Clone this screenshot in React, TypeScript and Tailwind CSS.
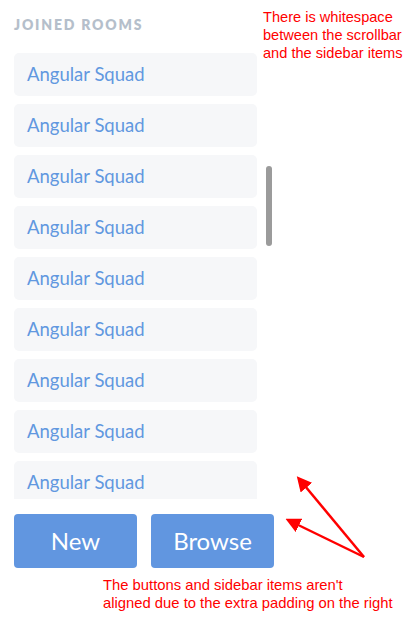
import React from "react";

const rooms = Array.from({ length: 9 }, () => "Angular Squad");

export default function App() {
  return (
    <div className="relative w-[419px] h-[621px] bg-white overflow-hidden" style={{ fontFamily: "Lato, 'Open Sans', sans-serif" }}>
      <div className="pl-[14px] pt-[14px] w-[274px]">
        <div className="h-[20px] flex items-center text-[14px] font-extrabold tracking-[1.8px] text-[#b5bfcb] uppercase">
          Joined Rooms
        </div>
        <div className="mt-[19px] h-[446px] flex overflow-hidden">
          <div className="w-[243px] flex flex-col gap-[8px] shrink-0">
            {rooms.map((r, i) => (
              <div key={i} className="h-[43px] shrink-0 rounded-[5px] bg-[#f6f7f9] pl-[13px] flex items-center text-[18.5px] text-[#6198e0]">
                {r}
              </div>
            ))}
          </div>
          <div className="ml-[9px] mt-[113px] w-[6px] h-[80px] rounded-full bg-[#9b9b9b]" />
        </div>
        <div className="mt-[15px] flex gap-[14px]">
          <button className="w-[123px] h-[54px] rounded-[4px] bg-[#6196e0] text-white text-[24px]">New</button>
          <button className="w-[123px] h-[54px] rounded-[4px] bg-[#6196e0] text-white text-[24px]">Browse</button>
        </div>
      </div>

      <div className="absolute left-[263px] top-[8px] text-[14.6px] leading-[18px] text-[#ff0000]" style={{ fontFamily: "'Liberation Sans', Arial, sans-serif" }}>
        There is whitespace
        <br />
        between the scrollbar
        <br />
        and the sidebar items
      </div>

      <div className="absolute left-[103px] top-[576px] text-[14.8px] leading-[18px] text-[#ff0000] whitespace-nowrap" style={{ fontFamily: "'Liberation Sans', Arial, sans-serif" }}>
        The buttons and sidebar items aren't
        <br />
        aligned due to the extra padding on the right
      </div>

      <svg className="absolute left-0 top-0" width="419" height="621" viewBox="0 0 419 621">
        <defs>
          <marker id="ah" markerWidth="6" markerHeight="6" refX="4" refY="3" orient="auto" markerUnits="strokeWidth">
            <path d="M0,0 L6,3 L0,6 Z" fill="#ff0000" />
          </marker>
        </defs>
        <line x1="364" y1="557" x2="300" y2="480" stroke="#ff0000" strokeWidth="2.5" markerEnd="url(#ah)" />
        <line x1="364" y1="557" x2="290" y2="521" stroke="#ff0000" strokeWidth="2.5" markerEnd="url(#ah)" />
      </svg>
    </div>
  );
}
